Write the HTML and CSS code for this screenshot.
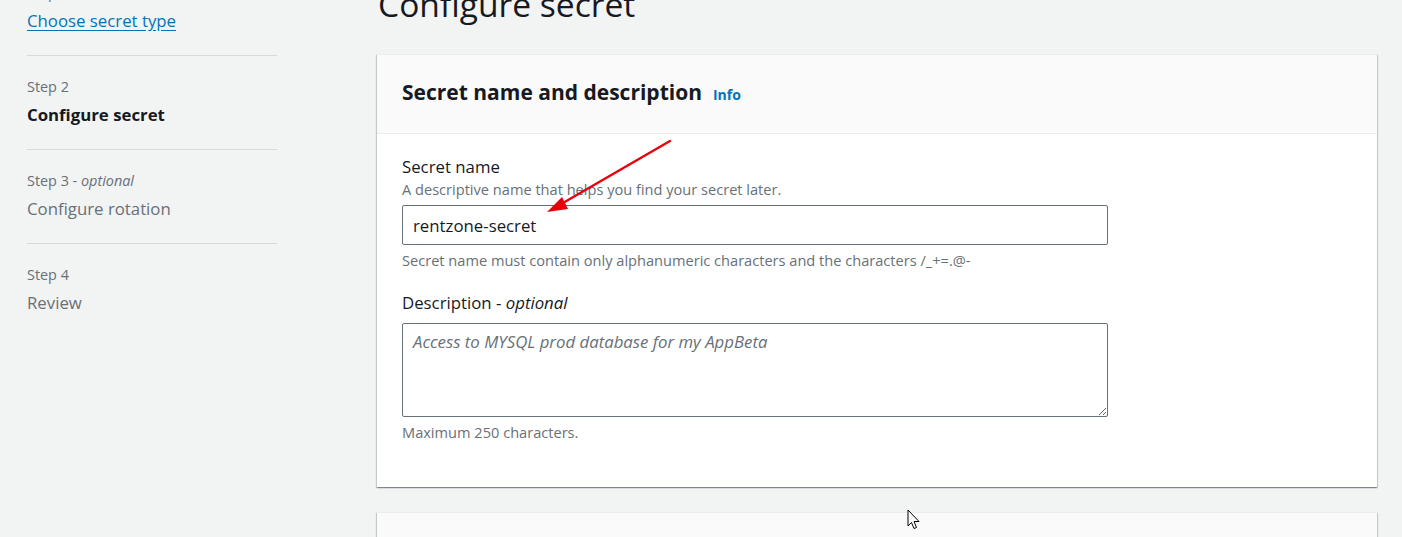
FILE: index.html
```html
<!DOCTYPE html>
<html>
<head>
<meta charset="utf-8">
<link rel="stylesheet" href="styles.css">
</head>
<body>
<div class="page">
  <nav class="steps">
    <div class="step">
      <div class="step-num">Step 1</div>
      <a class="step-link" href="#">Choose secret type</a>
    </div>
    <div class="step">
      <div class="step-num">Step 2</div>
      <div class="step-title active">Configure secret</div>
    </div>
    <div class="step">
      <div class="step-num">Step 3 - <i>optional</i></div>
      <div class="step-title">Configure rotation</div>
    </div>
    <div class="step">
      <div class="step-num">Step 4</div>
      <div class="step-title">Review</div>
    </div>
  </nav>
  <main class="main">
    <h1 class="page-title">Configure secret</h1>
    <section class="card">
      <header class="card-head">
        <h2>Secret name and description</h2>
        <a class="info" href="#">Info</a>
      </header>
      <div class="card-body">
        <div class="field">
          <label class="label">Secret name</label>
          <div class="desc">A descriptive name that helps you find your secret later.</div>
          <input class="input" type="text" value="rentzone-secret">
          <div class="hint">Secret name must contain only alphanumeric characters and the characters /_+=.@-</div>
        </div>
        <div class="field">
          <label class="label">Description - <i>optional</i></label>
          <textarea class="textarea" placeholder="Access to MYSQL prod database for my AppBeta"></textarea>
          <div class="hint">Maximum 250 characters.</div>
        </div>
      </div>
    </section>
    <section class="card next">
      <header class="card-head"></header>
    </section>
  </main>
</div>
<svg class="arrow" width="140" height="90" viewBox="0 0 140 90">
  <line x1="128" y1="2" x2="14" y2="68" stroke="#e8000b" stroke-width="2.4" stroke-linecap="round"/>
  <polygon points="5,73 20,58 26,70" fill="#e8000b"/>
</svg>
<svg class="cursor" width="14" height="22" viewBox="0 0 14 22">
  <path d="M1 1 L1 17 L4.5 13.5 L7 19.5 L9.5 18.5 L7 12.5 L12 12.5 Z" fill="#fff" stroke="#000" stroke-width="1" stroke-linejoin="miter"/>
</svg>
</body>
</html>
```

FILE: styles.css
```css
* { box-sizing: border-box; }
html, body { margin: 0; padding: 0; }
body {
  background: #f2f3f3;
  font-family: "Open Sans", "Noto Sans", sans-serif;
  color: #16191f;
  width: 1402px;
  height: 537px;
  overflow: hidden;
  position: relative;
}
.page {
  display: flex;
  margin-top: -39px;
  height: 576px;
  overflow: hidden;
}
.steps {
  width: 250px;
  margin-left: 27px;
  flex: none;
  display: flex;
  flex-direction: column;
}
.step {
  padding: 21px 0 22px;
  border-bottom: 1px solid #d5dbdb;
  display: flex;
  flex-direction: column;
  gap: 6px;
}
.step:first-child { padding-top: 22px; }
.step:last-child { border-bottom: none; }
.step-num {
  font-size: 14.4px;
  line-height: 20px;
  color: #687078;
}
.step-num i { font-style: italic; }
.step-link {
  font-size: 16.8px;
  line-height: 24px;
  color: #0073bb;
  text-decoration: underline;
  text-underline-offset: 3px;
  align-self: flex-start;
}
.step-title {
  font-size: 16.8px;
  line-height: 24px;
  color: #687078;
}
.step-title.active { color: #16191f; font-weight: 700; }
.main {
  margin-left: 100px;
  width: 1000px;
  flex: none;
}
.page-title {
  margin: 23px 0 0 1px;
  font-size: 33.6px;
  line-height: 40px;
  font-weight: 400;
  color: #16191f;
}
.card {
  margin-top: 30px;
  background: #fff;
  box-shadow: 0 1px 1px 0 rgba(0,28,36,.3), 1px 1px 1px 0 rgba(0,28,36,.15), -1px 1px 1px 0 rgba(0,28,36,.15);
  border-top: 1px solid #eaeded;
}
.card-head {
  background: #fafafa;
  border-bottom: 1px solid #eaeded;
  height: 79px;
  padding: 0 25px;
  display: flex;
  align-items: center;
  gap: 11px;
}
.card-head h2 {
  margin: -5px 0 0;
  font-size: 21px;
  font-weight: 700;
  line-height: 28px;
}
.info {
  font-size: 14px;
  font-weight: 700;
  color: #0073bb;
  text-decoration: none;
}
.card-body {
  padding: 20px 25px 45px;
  display: flex;
  flex-direction: column;
  gap: 20px;
}
.field { display: flex; flex-direction: column; }
.label {
  font-size: 16.8px;
  line-height: 25px;
  color: #16191f;
}
.desc, .hint {
  font-size: 14.6px;
  line-height: 20px;
  color: #687078;
}
.hint { margin-top: 5px; }
.input {
  margin-top: 6px;
  width: 706px;
  height: 40px;
  border: 1px solid #687078;
  border-radius: 2px;
  padding: 0 10px;
  font-family: inherit;
  font-size: 16.8px;
  color: #16191f;
  background: #fff;
}
.textarea {
  margin-top: 8px;
  width: 706px;
  height: 94px;
  border: 1px solid #687078;
  border-radius: 2px;
  padding: 6px 10px;
  font-family: inherit;
  font-size: 16.8px;
  line-height: 24px;
  color: #16191f;
  resize: vertical;
  display: block;
}
.textarea::placeholder { color: #687078; font-style: italic; }
.card.next { margin-top: 25px; }
.card.next .card-head { height: 60px; }
.arrow {
  position: absolute;
  left: 542px;
  top: 139px;
}
.cursor {
  position: absolute;
  left: 907px;
  top: 509px;
}
```
